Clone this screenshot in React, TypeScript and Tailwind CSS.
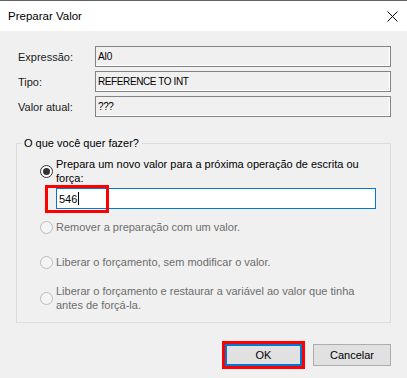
import React from 'react';

const FIELDS = [
    { label: 'Expressão:', value: 'AI0' },
    { label: 'Tipo:', value: 'REFERENCE TO INT' },
    { label: 'Valor atual:', value: '???' },
];

function Radio({ checked = false }: { checked?: boolean }) {
    return (
        <span
            className={
                checked
                    ? 'flex h-[13px] w-[13px] shrink-0 items-center justify-center rounded-full border border-[#333333] bg-white'
                    : 'flex h-[13px] w-[13px] shrink-0 items-center justify-center rounded-full border border-[#bcbcbc] bg-[#f4f4f4]'
            }
        >
            {checked && <span className="h-[7px] w-[7px] rounded-full bg-[#333333]" />}
        </span>
    );
}

export default function App() {
    return (
        <div className="relative flex h-[378px] w-[407px] flex-col border-t border-[#626262] bg-[#f0f0f0] font-['Liberation_Sans',Arial,sans-serif] text-[11px] leading-[14px] text-black">
            {/* Title bar */}
            <div className="flex h-[30px] items-center justify-between bg-white pl-2 pr-[9px]">
                <span className="text-[11.5px]">Preparar Valor</span>
                <svg width="11" height="11" viewBox="0 0 11 11" className="shrink-0">
                    <path d="M0.5 0.5 L10.5 10.5 M10.5 0.5 L0.5 10.5" stroke="#000" strokeWidth="1" fill="none" />
                </svg>
            </div>

            <div className="flex flex-col px-4 pt-[15px]">
                {/* Info rows */}
                <div className="grid grid-cols-[79px_1fr] gap-y-[4px]">
                    {FIELDS.map((f) => (
                        <React.Fragment key={f.label}>
                            <div className="flex items-center pl-[2px] text-[#1a1a1a]">{f.label}</div>
                            <div className="flex h-[21px] items-center border border-[#838383] bg-[#f0f0f0] pl-[2px] text-[10px] tracking-[-0.4px] shadow-[inset_-1px_-1px_0_#ffffff]">
                                {f.value}
                            </div>
                        </React.Fragment>
                    ))}
                </div>

                {/* Group box */}
                <fieldset className="mt-[19px] border border-[#dcdcdc] pb-[10px] pl-[23px] pr-[14px]">
                    <legend className="ml-[-19px] px-[3px]">O que você quer fazer?</legend>

                    <div className="mt-[7px] flex items-center gap-[3px]">
                        <Radio checked />
                        <span className="w-[315px]">Prepara um novo valor para a próxima operação de escrita ou força:</span>
                    </div>

                    <div className="relative ml-[16px] mt-[3px] flex h-[21px] w-[320px] items-center border border-[#0078d7] bg-white pl-[2px]">
                        <span>546</span>
                        <span className="ml-px h-[13px] w-px bg-black" />
                        <div className="absolute left-[-12px] top-[-4px] h-[28px] w-[64px] border-[3px] border-[#ff0000]" />
                    </div>

                    <div className="mt-[11px] flex items-center gap-[3px] text-[#6d6d6d]">
                        <Radio />
                        <span>Remover a preparação com um valor.</span>
                    </div>

                    <div className="mt-[21px] flex items-center gap-[3px] text-[#6d6d6d]">
                        <Radio />
                        <span>Liberar o forçamento, sem modificar o valor.</span>
                    </div>

                    <div className="mt-[15px] flex items-center gap-[3px] text-[#6d6d6d]">
                        <Radio />
                        <span className="w-[315px]">Liberar o forçamento e restaurar a variável ao valor que tinha antes de forçá-la.</span>
                    </div>
                </fieldset>

                {/* Buttons */}
                <div className="mt-[21px] flex justify-end gap-[11px]">
                    <div className="relative">
                        <button className="flex h-[22px] w-[77px] items-center justify-center border-2 border-[#0078d7] bg-[#e1e1e1]">
                            OK
                        </button>
                        <div className="absolute -inset-[3px] border-[3px] border-[#ff0000]" />
                    </div>
                    <button className="flex h-[22px] w-[78px] items-center justify-center border border-[#adadad] bg-[#e1e1e1]">
                        Cancelar
                    </button>
                </div>
            </div>
        </div>
    );
}
